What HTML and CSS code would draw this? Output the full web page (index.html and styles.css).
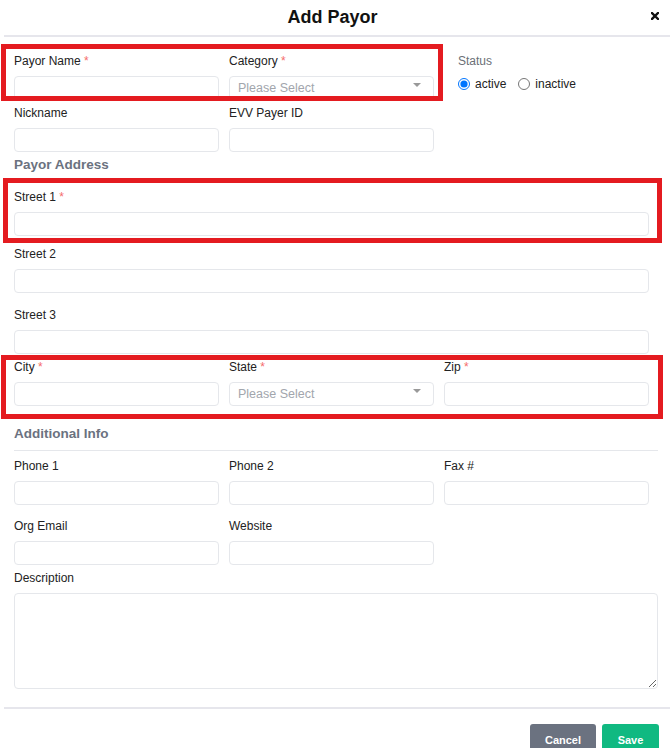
FILE: index.html
```html
<!DOCTYPE html>
<html lang="en">
<head>
    <meta charset="UTF-8">
    <meta name="viewport" content="width=device-width, initial-scale=1.0">
    <title>Add Payor</title>
    <link rel="stylesheet" href="styles.css">
</head>
<body>
    <div class="modal">
        <div class="modal-header">
            <h1 class="modal-title">Add Payor</h1>
            <button class="close" type="button" aria-label="Close">
                <svg width="8" height="8" viewBox="0 0 8 8"><path d="M1 1L7 7M7 1L1 7" stroke="#111" stroke-width="2.4" stroke-linecap="square"/></svg>
            </button>
        </div>

        <form class="modal-body">
            <div class="row mb-6">
                <div class="field">
                    <label>Payor Name <span class="req">*</span></label>
                    <input class="input" type="text">
                </div>
                <div class="field">
                    <label>Category <span class="req">*</span></label>
                    <div class="select"><span>Please Select</span><i class="caret"></i></div>
                </div>
                <div class="field status">
                    <label class="muted">Status</label>
                    <div class="radios">
                        <label class="radio"><input type="radio" name="status" checked> active</label>
                        <label class="radio"><input type="radio" name="status"> inactive</label>
                    </div>
                </div>
            </div>

            <div class="row mb-4">
                <div class="field">
                    <label>Nickname</label>
                    <input class="input" type="text">
                </div>
                <div class="field">
                    <label>EVV Payer ID</label>
                    <input class="input" type="text">
                </div>
            </div>

            <h2 class="section-title mb-16">Payor Address</h2>

            <div class="row mb-11">
                <div class="field full">
                    <label>Street 1 <span class="req">*</span></label>
                    <input class="input" type="text">
                </div>
            </div>
            <div class="row mb-15">
                <div class="field full">
                    <label>Street 2</label>
                    <input class="input" type="text">
                </div>
            </div>
            <div class="row mb-6">
                <div class="field full">
                    <label>Street 3</label>
                    <input class="input" type="text">
                </div>
            </div>
            <div class="row mb-19">
                <div class="field">
                    <label>City <span class="req">*</span></label>
                    <input class="input" type="text">
                </div>
                <div class="field">
                    <label>State <span class="req">*</span></label>
                    <div class="select"><span>Please Select</span><i class="caret"></i></div>
                </div>
                <div class="field">
                    <label>Zip <span class="req">*</span></label>
                    <input class="input" type="text">
                </div>
            </div>

            <h2 class="section-title ruled">Additional Info</h2>

            <div class="row mb-14">
                <div class="field">
                    <label>Phone 1</label>
                    <input class="input" type="text">
                </div>
                <div class="field">
                    <label>Phone 2</label>
                    <input class="input" type="text">
                </div>
                <div class="field">
                    <label>Fax #</label>
                    <input class="input" type="text">
                </div>
            </div>
            <div class="row mb-6">
                <div class="field">
                    <label>Org Email</label>
                    <input class="input" type="text">
                </div>
                <div class="field">
                    <label>Website</label>
                    <input class="input" type="text">
                </div>
            </div>
            <div class="field">
                <label>Description</label>
                <textarea class="textarea"></textarea>
            </div>
        </form>

        <div class="modal-footer">
            <button class="btn btn-cancel" type="button">Cancel</button>
            <button class="btn btn-save" type="button">Save</button>
        </div>
    </div>

    <!-- review highlights -->
    <div class="mark mark-top"></div>
    <div class="mark mark-street"></div>
    <div class="mark mark-city"></div>
</body>
</html>
```

FILE: styles.css
```css
body {
    margin: 0;
    font-family: "Liberation Sans", Arial, sans-serif;
    font-size: 12px;
    color: #222;
    background-color: #fff;
}
.modal {
    margin-left: 4px;
}
.modal-header {
    position: relative;
    height: 35px;
    padding-right: 9px;
    display: flex;
    align-items: center;
    justify-content: center;
    border-bottom: 2px solid #e6e6ec;
}
.modal-title {
    margin: 0;
    font-size: 18px;
    font-weight: bold;
    color: #111;
}
.close {
    position: absolute;
    right: 11px;
    top: 12px;
    width: 8px;
    height: 8px;
    padding: 0;
    border: none;
    background: none;
    display: block;
}
.close svg {
    display: block;
}
.modal-body {
    padding: 17px 12px 0 10px;
}
.row {
    display: grid;
    grid-template-columns: repeat(3, 205px);
    column-gap: 10px;
}
.field > label {
    display: block;
    line-height: 14px;
    margin-bottom: 8px;
    color: #222;
}
.field.full {
    grid-column: 1 / -1;
}
.req {
    color: #f56c6c;
}
.muted {
    color: #6b6f76 !important;
}
.input {
    display: block;
    width: 100%;
    height: 24px;
    box-sizing: border-box;
    border: 1px solid #e5e7eb;
    border-radius: 4px;
    background: #fff;
    font: inherit;
}
.select {
    height: 24px;
    box-sizing: border-box;
    border: 1px solid #e5e7eb;
    border-radius: 4px;
    padding: 0 12px 0 8px;
    display: flex;
    align-items: center;
    justify-content: space-between;
    color: #a2a6ad;
    font-size: 12.5px;
}
.caret {
    align-self: flex-start;
    margin-top: 6px;
    width: 0;
    height: 0;
    border-left: 4px solid transparent;
    border-right: 4px solid transparent;
    border-top: 4px solid #999;
}
.status {
    padding-left: 14px;
}
.radios {
    height: 16px;
    display: flex;
    align-items: center;
    gap: 12px;
}
.radio {
    display: flex;
    align-items: center;
    gap: 5px;
    color: #222;
}
.radio input {
    width: 12px;
    height: 12px;
    margin: 0;
}
.section-title {
    margin: 0;
    font-size: 13.5px;
    line-height: 18px;
    font-weight: bold;
    color: #6b7280;
}
.section-title.ruled {
    padding-bottom: 7px;
    border-bottom: 1px solid #e5e7eb;
    margin-bottom: 8px;
}
.mb-4 { margin-bottom: 4px; }
.mb-6 { margin-bottom: 6px; }
.mb-11 { margin-bottom: 11px; }
.mb-14 { margin-bottom: 14px; }
.mb-15 { margin-bottom: 15px; }
.mb-16 { margin-bottom: 16px; }
.mb-19 { margin-bottom: 19px; }
.textarea {
    display: block;
    width: 100%;
    height: 96px;
    box-sizing: border-box;
    border: 1px solid #e5e7eb;
    border-radius: 4px;
    resize: vertical;
    font: inherit;
}
.modal-footer {
    margin-top: 18px;
    border-top: 2px solid #e6e6ec;
    padding: 15px 11px 0 0;
    display: flex;
    justify-content: flex-end;
    gap: 6px;
}
.btn {
    height: 32px;
    border: none;
    border-radius: 3px;
    color: #fff;
    font-family: inherit;
    font-size: 11px;
    font-weight: bold;
    cursor: pointer;
}
.btn-cancel {
    width: 66px;
    background-color: #6b7280;
}
.btn-save {
    width: 57px;
    background-color: #10b981;
}
.mark {
    position: absolute;
    box-sizing: border-box;
    border: 5px solid #e41b20;
}
.mark-top {
    left: 1px;
    top: 44px;
    width: 442px;
    height: 57px;
}
.mark-street {
    left: 3px;
    top: 178px;
    width: 659px;
    height: 65px;
}
.mark-city {
    left: 1px;
    top: 355px;
    width: 662px;
    height: 64px;
}
```
